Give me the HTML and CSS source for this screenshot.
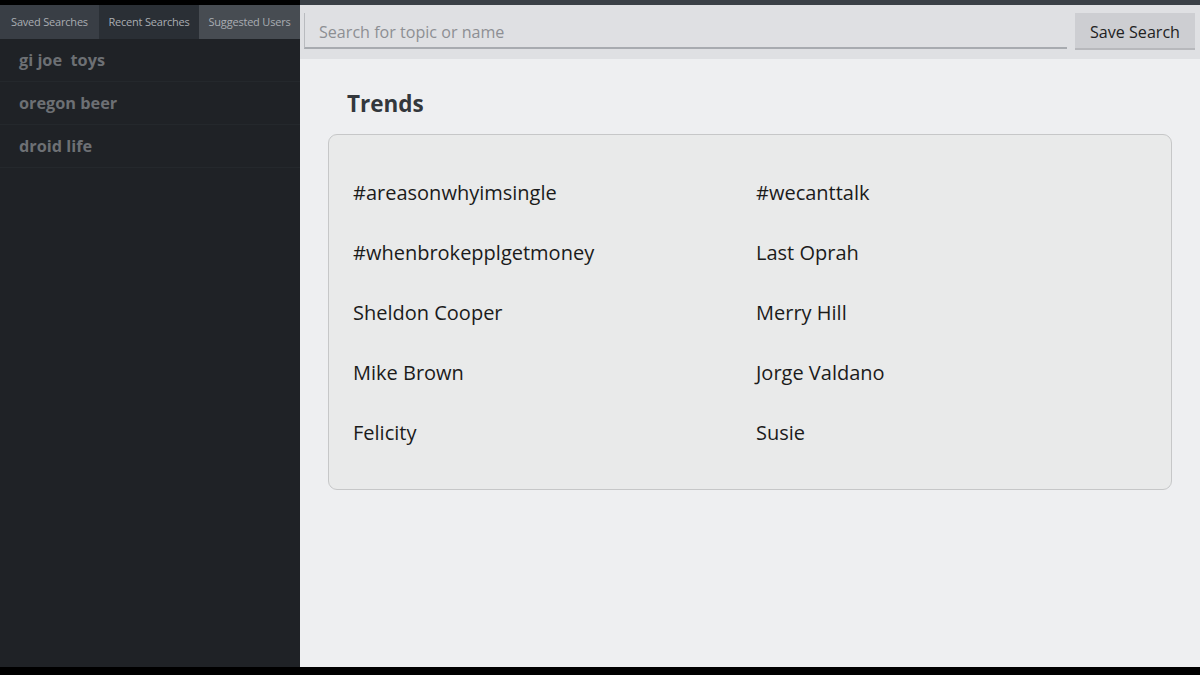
FILE: index.html
```html
<!DOCTYPE html>
<html>
<head>
<meta charset="utf-8">
<link rel="stylesheet" href="styles.css">
</head>
<body>
<div class="screen">
  <aside class="side">
    <div class="tabs">
      <div class="tab tab-saved">Saved Searches</div>
      <div class="tab tab-recent">Recent Searches</div>
      <div class="tab tab-users">Suggested Users</div>
    </div>
    <ul class="list">
      <li>gi joe&nbsp; toys</li>
      <li>oregon beer</li>
      <li>droid life</li>
    </ul>
  </aside>
  <main class="main">
    <div class="searchbar">
      <div class="input">Search for topic or name</div>
      <button class="save">Save Search</button>
    </div>
    <div class="content">
      <h2 class="title">Trends</h2>
      <div class="card">
        <div class="trend">#areasonwhyimsingle</div>
        <div class="trend">#wecanttalk</div>
        <div class="trend">#whenbrokepplgetmoney</div>
        <div class="trend">Last Oprah</div>
        <div class="trend">Sheldon Cooper</div>
        <div class="trend">Merry Hill</div>
        <div class="trend">Mike Brown</div>
        <div class="trend">Jorge Valdano</div>
        <div class="trend">Felicity</div>
        <div class="trend">Susie</div>
      </div>
    </div>
  </main>
</div>
</body>
</html>
```
FILE: styles.css
```css
* { box-sizing: border-box; }
html, body { margin: 0; padding: 0; background: #000; }
body {
  width: 1200px;
  height: 675px;
  font-family: "Open Sans", "DejaVu Sans", sans-serif;
  overflow: hidden;
}
.screen {
  display: flex;
  width: 1200px;
  height: 667px;
}
.side {
  width: 300px;
  background: #1f2226;
  border-top: 5px solid #000;
}
.tabs {
  display: flex;
  height: 34px;
}
.tab {
  display: flex;
  align-items: center;
  justify-content: center;
  font-size: 11px;
  color: #a9adb2;
  letter-spacing: -0.2px;
  padding-bottom: 2px;
}
.tab-saved { width: 99px; background: #393e45; }
.tab-recent { width: 100px; background: #2a2f35; }
.tab-users { width: 101px; background: #474c52; }
.list {
  list-style: none;
  margin: 0;
  padding: 0;
}
.list li {
  height: 43px;
  line-height: 42px;
  padding-left: 19px;
  font-size: 16.3px;
  font-weight: 700;
  color: #6d7074;
  border-bottom: 1px solid #24282c;
}
.main {
  flex: 1;
  display: flex;
  flex-direction: column;
  background: #eeeff1;
  border-top: 5px solid #3b4047;
}
.searchbar {
  height: 54px;
  background: #dfe0e3;
  display: flex;
  align-items: flex-start;
  padding: 8px 5px 0 4px;
}
.input {
  flex: 1;
  height: 36px;
  line-height: 38px;
  padding-left: 14px;
  font-size: 16.1px;
  color: #8d8f93;
  border-bottom: 2px solid #a8abb0;
  border-left: 1px solid #b9bbbf;
  margin-right: 8px;
}
.save {
  width: 120px;
  height: 37px;
  border: none;
  background: #cdced2;
  border-bottom: 2px solid #b7b8bc;
  font-family: inherit;
  font-size: 16.1px;
  color: #222;
  padding: 2px 0 0 0;
}
.content {
  padding: 31px 28px 0 28px;
}
.title {
  margin: 0 0 16px 19px;
  font-size: 22.5px;
  font-weight: 700;
  color: #33373c;
  line-height: 28px;
}
.card {
  width: 844px;
  height: 356px;
  background: #e9eaea;
  border: 1px solid #c6c7c8;
  border-radius: 9px;
  display: grid;
  grid-template-columns: 403px 1fr;
  grid-auto-rows: 60px;
  padding: 28px 0 0 24px;
}
.trend {
  font-size: 20px;
  color: #1b1b1b;
  line-height: 60px;
}
```
